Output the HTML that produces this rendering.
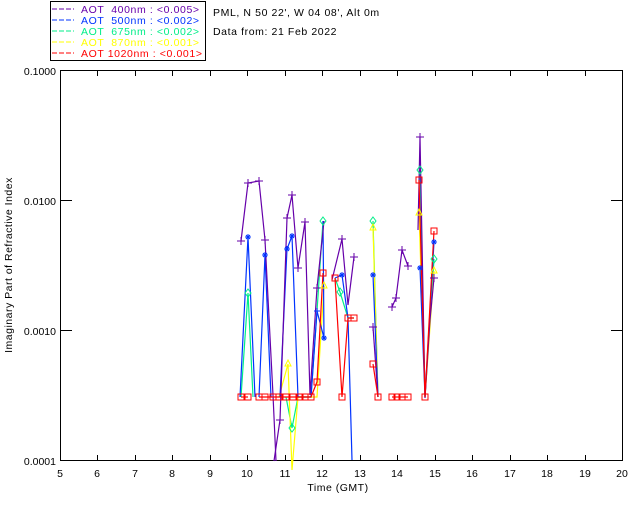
<!DOCTYPE html>
<html><head><style>
html,body{margin:0;padding:0;background:#fff;}
svg{display:block;font-family:"Liberation Sans",sans-serif;}
</style></head><body>
<svg width="640" height="512" viewBox="0 0 640 512" xmlns="http://www.w3.org/2000/svg">
<rect width="640" height="512" fill="#fff"/>
<rect x="50.5" y="1.5" width="155" height="59" fill="none" stroke="#000" stroke-width="1"/>
<g font-size="10.5" letter-spacing="0.6">
<line x1="52" y1="9" x2="74" y2="9" stroke="#6600aa" stroke-dasharray="5,2"/>
<text x="81" y="13" fill="#6600aa" xml:space="preserve">AOT  400nm : &lt;0.005&gt;</text>
<line x1="52" y1="20" x2="74" y2="20" stroke="#0033ff" stroke-dasharray="5,2"/>
<text x="81" y="24" fill="#0033ff" xml:space="preserve">AOT  500nm : &lt;0.002&gt;</text>
<line x1="52" y1="31" x2="74" y2="31" stroke="#00ee88" stroke-dasharray="5,2"/>
<text x="81" y="35" fill="#00ee88" xml:space="preserve">AOT  675nm : &lt;0.002&gt;</text>
<line x1="52" y1="42" x2="74" y2="42" stroke="#ffff00" stroke-dasharray="5,2"/>
<text x="81" y="46" fill="#ffff00" xml:space="preserve">AOT  870nm : &lt;0.001&gt;</text>
<line x1="52" y1="53" x2="74" y2="53" stroke="#ff0000" stroke-dasharray="5,2"/>
<text x="81" y="57" fill="#ff0000" xml:space="preserve">AOT 1020nm : &lt;0.001&gt;</text>
</g>
<g font-size="10.5" fill="#000" letter-spacing="0.6">
<text x="213" y="16">PML, N 50 22', W 04 08', Alt 0m</text>
<text x="213" y="35">Data from: 21 Feb 2022</text>
</g>
<rect x="60.5" y="70.5" width="562" height="390" fill="none" stroke="#000"/>
<g stroke="#000">
<path d="M97.5 461v-6M135.5 461v-6M172.5 461v-6M210.5 461v-6M247.5 461v-6M285.5 461v-6M322.5 461v-6M360.5 461v-6M397.5 461v-6M435.5 461v-6M472.5 461v-6M510.5 461v-6M547.5 461v-6M585.5 461v-6"/>
<path d="M97.5 70v6M135.5 70v6M172.5 70v6M210.5 70v6M247.5 70v6M285.5 70v6M322.5 70v6M360.5 70v6M397.5 70v6M435.5 70v6M472.5 70v6M510.5 70v6M547.5 70v6M585.5 70v6"/>
<path d="M60 200.5h12M60 330.5h12M623 200.5h-12M623 330.5h-12"/>
</g>
<g font-size="10.5" fill="#000">
<g text-anchor="middle">
<text x="60" y="477">5</text><text x="97" y="477">6</text><text x="135" y="477">7</text><text x="172" y="477">8</text><text x="210" y="477">9</text><text x="247" y="477">10</text><text x="285" y="477">11</text><text x="322" y="477">12</text><text x="360" y="477">13</text><text x="397" y="477">14</text><text x="435" y="477">15</text><text x="472" y="477">16</text><text x="510" y="477">17</text><text x="547" y="477">18</text><text x="585" y="477">19</text><text x="622" y="477">20</text>
<text x="338" y="491" letter-spacing="0.5">Time (GMT)</text>
</g>
<g text-anchor="end">
<text x="56" y="75">0.1000</text><text x="56" y="205">0.0100</text><text x="56" y="335">0.0010</text><text x="56" y="465">0.0001</text>
</g>
<text transform="translate(12,265) rotate(-90)" text-anchor="middle" letter-spacing="0.5">Imaginary Part of Refractive Index</text>
</g>
<g fill="none" stroke-width="1.2">
<polyline stroke="#00ee88" points="241,397 248,293 253,397"/>
<polyline stroke="#00ee88" points="286,397 292,428 298,397 311,397 317,311 323,221"/>
<polyline stroke="#00ee88" points="335,278 340,292 348,318 354,318"/>
<polyline stroke="#00ee88" points="373,221 378,397"/>
<polyline stroke="#00ee88" points="420,170 425,397 434,259"/>
<polyline stroke="#ffff00" points="279,397 288,364 292,470 298,397 311,397 317,397 324,286"/>
<polyline stroke="#ffff00" points="373,228 378,397"/>
<polyline stroke="#ffff00" points="419,213 425,397 434,271"/>
<polyline stroke="#0033ff" points="240,397 248,237 255,397"/>
<polyline stroke="#0033ff" points="259,397 265,255 271,397"/>
<polyline stroke="#0033ff" points="280,397 287,249 292,236 298,397 311,397 317,311 324,338 323,221"/>
<polyline stroke="#0033ff" points="335,278 342,275 348,318 352,460"/>
<polyline stroke="#0033ff" points="373,275 378,397"/>
<polyline stroke="#0033ff" points="420,268 425,397 434,242"/>
<polyline stroke="#6600aa" points="241,241 248,183 259,181 265,240 273,395 276,461"/>
<polyline stroke="#6600aa" points="274,461 280,420 287,218 292,195 298,268 305,222 310,395 317,288 324,221"/>
<polyline stroke="#6600aa" points="332,280 342,239 348,305 354,257"/>
<polyline stroke="#6600aa" points="373,327 378,397"/>
<polyline stroke="#6600aa" points="392,307 396,298 402,250 408,266"/>
<polyline stroke="#6600aa" points="418,230 420,137 425,398 430,320 434,278"/>
<polyline stroke="#ff0000" points="241,397 248,397"/>
<polyline stroke="#ff0000" points="259,397 311,397 317,382 323,273"/>
<polyline stroke="#ff0000" points="335,278 342,397 348,318 354,318"/>
<polyline stroke="#ff0000" points="373,364 378,397"/>
<polyline stroke="#ff0000" points="392,397 408,397"/>
<polyline stroke="#ff0000" points="419,180 425,397 434,231"/>
</g>
<g fill="none" stroke="#ff0000" stroke-width="1">
<rect x="238" y="394" width="6" height="6"/><rect x="245" y="394" width="6" height="6"/>
<rect x="256" y="394" width="6" height="6"/><rect x="262" y="394" width="6" height="6"/>
<rect x="270" y="394" width="6" height="6"/><rect x="276" y="394" width="6" height="6"/>
<rect x="283" y="394" width="6" height="6"/><rect x="290" y="394" width="6" height="6"/>
<rect x="297" y="394" width="6" height="6"/><rect x="302" y="394" width="6" height="6"/>
<rect x="308" y="394" width="6" height="6"/><rect x="314" y="379" width="6" height="6"/>
<rect x="320" y="270" width="6" height="6"/><rect x="332" y="275" width="6" height="6"/>
<rect x="339" y="394" width="6" height="6"/><rect x="345" y="315" width="6" height="6"/>
<rect x="351" y="315" width="6" height="6"/><rect x="370" y="361" width="6" height="6"/>
<rect x="375" y="394" width="6" height="6"/><rect x="389" y="394" width="6" height="6"/>
<rect x="394" y="394" width="6" height="6"/><rect x="399" y="394" width="6" height="6"/>
<rect x="405" y="394" width="6" height="6"/><rect x="416" y="177" width="6" height="6"/>
<rect x="422" y="394" width="6" height="6"/><rect x="431" y="228" width="6" height="6"/>
</g>
<g stroke="#0033ff" stroke-width="1">
<path d="M245 237h6M248 234v6M246 235l4 4M250 235l-4 4"/>
<path d="M262 255h6M265 252v6M263 253l4 4M267 253l-4 4"/>
<path d="M284 249h6M287 246v6M285 247l4 4M289 247l-4 4"/>
<path d="M289 236h6M292 233v6M290 234l4 4M294 234l-4 4"/>
<path d="M321 338h6M324 335v6M322 336l4 4M326 336l-4 4"/>
<path d="M339 275h6M342 272v6M340 273l4 4M344 273l-4 4"/>
<path d="M370 275h6M373 272v6M371 273l4 4M375 273l-4 4"/>
<path d="M417 268h6M420 265v6M418 266l4 4M422 266l-4 4"/>
<path d="M431 242h6M434 239v6M432 240l4 4M436 240l-4 4"/>
<path d="M314 311h6M317 308v6"/>
</g>
<g stroke="#6600aa" stroke-width="1">
<path d="M237 241h8M241 237v8M244 183h8M248 179v8M255 181h8M259 177v8M261 240h8M265 236v8M276 420h8M280 416v8M283 218h8M287 214v8M288 195h8M292 191v8M294 268h8M298 264v8M301 222h8M305 218v8M313 288h8M317 284v8M338 239h8M342 235v8M350 257h8M354 253v8M369 327h8M373 323v8M388 307h8M392 303v8M392 298h8M396 294v8M398 250h8M402 246v8M404 266h8M408 262v8M416 137h8M420 133v8M430 278h8M434 274v8"/>
</g>
<g fill="none" stroke="#00ee88" stroke-width="1">
<path d="M248 289l3 4-3 4-3-4zM292 424l3 4-3 4-3-4zM323 217l3 4-3 4-3-4zM340 288l3 4-3 4-3-4zM373 217l3 4-3 4-3-4zM420 166l3 4-3 4-3-4zM434 255l3 4-3 4-3-4z"/>
</g>
<g fill="none" stroke="#ffff00" stroke-width="1">
<path d="M288 360l3 6h-6zM324 282l3 6h-6zM373 224l3 6h-6zM419 209l3 6h-6zM434 267l3 6h-6z"/>
</g>
</svg>
</body></html>
